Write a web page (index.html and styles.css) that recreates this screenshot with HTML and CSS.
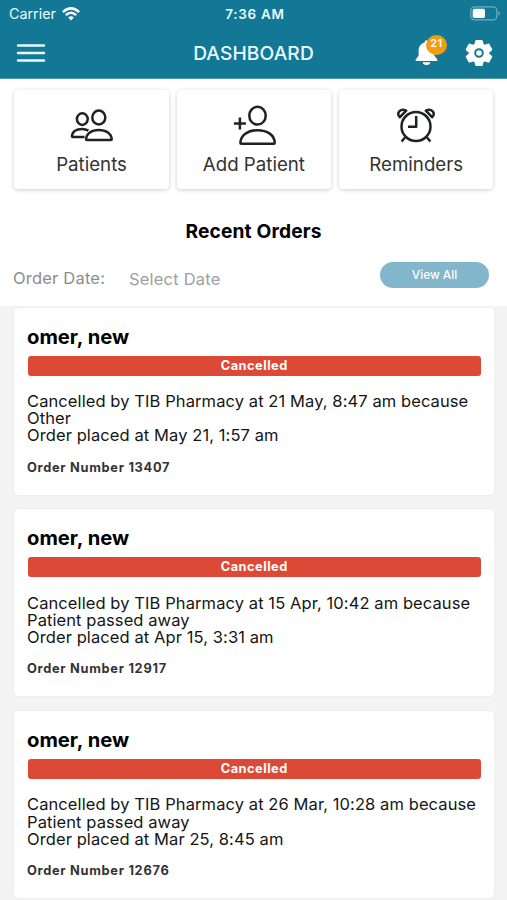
FILE: index.html
```html
<!DOCTYPE html>
<html lang="en">
<head>
<meta charset="utf-8">
<title>Dashboard</title>
<link rel="stylesheet" href="styles.css">
</head>
<body>
<header class="header">
  <div class="status">
    <div class="carrier"><span>Carrier</span>
      <svg class="wifi" width="18" height="14" viewBox="0 0 18 14" fill="none" stroke="#fff" stroke-width="2.5"><path d="M.9 5.2Q9-2.4 17.1 5.2M3.8 8.1q5.2-4.6 10.4 0"/><path d="M6.2 10.4Q9 8.2 11.8 10.4L9 13.6z" fill="#fff" stroke="none"/></svg>
    </div>
    <span class="time">7:36 AM</span>
    <svg class="battery" width="31" height="15" viewBox="0 0 31 15"><rect x=".8" y=".8" width="26" height="13" rx="3.6" fill="none" stroke="#6faec4" stroke-width="1.2"/><rect x="2.7" y="2.7" width="12.3" height="9.2" rx="1.7" fill="#fff"/><path d="M28.4 5v4.8q3-2.4 0-4.8" fill="#6faec4"/></svg>
  </div>
  <div class="nav">
    <svg class="menu" width="30" height="20" viewBox="0 0 30 20" stroke="#e8faff" stroke-width="2.5" stroke-linecap="round"><path d="M2 2.4h26M2 10h26M2 17.5h26"/></svg>
    <h1 class="title">DASHBOARD</h1>
    <div class="actions">
      <div class="bell">
        <svg width="23" height="28" viewBox="0 0 23 28" fill="#fff"><path d="M11.5 1.2c-1 0-1.7.8-1.7 1.7v.6C5.8 4.4 3.6 7.6 3.6 11.6v5.2L.7 20.5q-.9 1.500 1 1.500h19.600q1.900 0 1-1.500l-2.900-3.700v-5.200c0-4-2.200-7.200-6.200-8.100v-.6c0-.9-.7-1.700-1.700-1.700zM7.800 23.300h7.400a3.700 2.600 0 0 1-7.400 0z"/></svg>
        <span class="badge">21</span>
      </div>
      <svg class="gear" width="28" height="28" viewBox="0 0 28 28"><path fill="#fff" stroke="#fff" stroke-width="2.6" stroke-linejoin="round" d="M11.4 2.3h5.2l.7 3.5 2.4 1.4 3.6-1.3 2.6 4.5-2.9 2.5v2.400l2.900 2.500-2.600 4.500-3.600-1.300-2.400 1.400-.7 3.300h-5.200l-.7-3.300-2.400-1.400-3.600 1.300-2.600-4.500L5 15.300v-2.400L2.100 10.400l2.600-4.500 3.600 1.300 2.400-1.400z"/><circle cx="14" cy="14" r="3.800" fill="#fff" stroke="#127896" stroke-width="2"/></svg>
    </div>
  </div>
</header>
<section class="tiles">
  <div class="tile">
    <svg width="44" height="42" viewBox="0 0 44 42" fill="none" stroke="#202124" stroke-width="2.5" stroke-linejoin="round"><ellipse cx="28.8" cy="16.5" rx="6.5" ry="7"/><ellipse cx="12.3" cy="18.100" rx="5.400" ry="5.800"/><path d="M16.100 38.500c0-5.900 5.600-9.600 12.700-9.600s12.900 3.700 12.900 9.600q0 .5-.7.500H16.800q-.7 0-.7-.5zM14.500 36H2.600q-.8 0-.7-.8c.4-4.600 4.600-7.300 10.100-7.300 2.600 0 4.700.6 6.400 1.700"/></svg>
    <span class="tile-label">Patients</span>
  </div>
  <div class="tile">
    <svg width="44" height="42" viewBox="0 0 44 42" fill="none" stroke="#202124" stroke-width="2.5" stroke-linejoin="round"><ellipse cx="25.5" cy="14.700" rx="8.200" ry="8.900"/><path d="M8.400 42c0-7.900 7.300-12.800 17.100-12.800s17.200 4.900 17.200 12.800q0 .7-.8.700H9.200q-.8 0-.8-.7zM1.900 22.500h12M7.900 16.500v12"/></svg>
    <span class="tile-label">Add Patient</span>
  </div>
  <div class="tile">
    <svg width="44" height="42" viewBox="0 0 44 42" fill="none" stroke="#202124" stroke-width="2.5" stroke-linejoin="round"><circle cx="22" cy="25.500" r="14.500"/><path d="M22.200 15v10.700H14M11 36.500l-3.400 4M33 36.500l3.400 4M5.900 16.200C1.500 12.500 6.500 6.800 12.200 9.600zM38.100 16.200c4.400-3.700-.6-9.400-6.300-6.600z"/></svg>
    <span class="tile-label">Reminders</span>
  </div>
</section>
<h2 class="section-title">Recent Orders</h2>
<div class="filter">
  <span class="filter-label">Order Date:</span>
  <span class="filter-value">Select Date</span>
  <button class="view-all">View All</button>
</div>
<main class="orders">
  <article class="card">
    <h3 class="name">omer, new</h3>
    <div class="state">Cancelled</div>
    <p class="details">Cancelled by TIB Pharmacy at 21 May, 8:47 am because<br>Other<br>Order placed at May 21, 1:57 am</p>
    <div class="number">Order Number 13407</div>
  </article>
  <article class="card">
    <h3 class="name">omer, new</h3>
    <div class="state">Cancelled</div>
    <p class="details">Cancelled by TIB Pharmacy at 15 Apr, 10:42 am because<br>Patient passed away<br>Order placed at Apr 15, 3:31 am</p>
    <div class="number">Order Number 12917</div>
  </article>
  <article class="card">
    <h3 class="name">omer, new</h3>
    <div class="state">Cancelled</div>
    <p class="details">Cancelled by TIB Pharmacy at 26 Mar, 10:28 am because<br>Patient passed away<br>Order placed at Mar 25, 8:45 am</p>
    <div class="number">Order Number 12676</div>
  </article>
</main>
</body>
</html>
```
FILE: styles.css
```css
* { box-sizing: border-box; }
body { margin: 0; height: 900px; overflow: hidden; display: flex; flex-direction: column; background: #fff; font-family: Inter, "Liberation Sans", sans-serif; color: #000; }
h1, h2, h3, p { margin: 0; }
svg { display: block; }
.header { height: 79px; flex: none; background: #127896; color: #e8faff; border-bottom: 1px solid #4b9ab1; }
.status { height: 27px; padding: 0 6px 0 9px; display: grid; grid-template-columns: 1fr auto 1fr; align-items: center; font-size: 14px; }
.carrier { display: flex; align-items: center; gap: 6px; font-size: 14.3px; }
.time { font-weight: 600; font-size: 13.5px; letter-spacing: .7px; }
.battery { justify-self: end; }
.nav { height: 51px; padding: 0 14px 0 16px; display: grid; grid-template-columns: 1fr auto 1fr; align-items: center; }
.title { font-size: 19.2px; font-weight: 500; letter-spacing: .1px; margin-right: 2px; }
.actions { display: flex; justify-content: flex-end; align-items: center; gap: 27px; }
.bell { position: relative; width: 23px; }
.badge { position: absolute; left: 11px; top: -4px; width: 21px; height: 20px; border-radius: 50%; background: #f39c12; color: #fff; font-size: 11px; font-weight: 600; line-height: 17px; letter-spacing: .6px; text-align: center; }
.tiles { flex: none; display: grid; grid-template-columns: repeat(3, 1fr); gap: 8px; padding: 10.5px 13.6px 0 14.4px; }
.tile { height: 99px; border-radius: 4px; background: #fff; box-shadow: 0 1px 4px rgba(0,0,0,.2); display: flex; flex-direction: column; align-items: center; padding-top: 11px; }
.tile svg { overflow: visible; }
.tile-label { margin-top: 10px; font-size: 18.7px; line-height: 24px; color: #333; }
.section-title { flex: none; margin-top: 29.5px; font-size: 19.2px; line-height: 26px; font-weight: 650; letter-spacing: .15px; text-align: center; }
.filter { flex: none; height: 62px; padding: 18px 18px 0 13px; display: flex; align-items: flex-start; font-size: 16.5px; line-height: 22px; letter-spacing: .2px; color: #8d8d8d; }
.filter-label { padding-top: 5px; width: 116px; }
.filter-value { padding-top: 6px; color: #a0a0a0; }
.view-all { margin-left: auto; width: 109px; height: 26px; padding: 0 0 1px; border: 0; border-radius: 13px; background: #82b6ca; color: #fff; font: 500 11.8px Inter, sans-serif; }
.orders { flex: 1; background: #f4f4f4; padding: 1.500px 13.500px 0 14px; display: flex; flex-direction: column; gap: 14.7px; }
.card { flex: none; height: 187px; padding: 17px 13px 0; border-radius: 4px; background: #fff; box-shadow: 0 0 2px rgba(0,0,0,.1); }
.name { font-size: 20.2px; line-height: 24px; font-weight: 650; }
.state { margin: 7px 0 0 1px; height: 20px; border-radius: 3px; background: #dc4936; color: #fff; font-size: 12.8px; line-height: 20.5px; font-weight: 700; letter-spacing: .5px; text-align: center; }
.details { margin-top: 17.5px; font-size: 16.5px; line-height: 17.2px; letter-spacing: .09px; white-space: nowrap; color: #151515; }
.number { margin-top: 15px; font-size: 12.8px; line-height: 16px; font-weight: 650; letter-spacing: .72px; color: #333; }
```
